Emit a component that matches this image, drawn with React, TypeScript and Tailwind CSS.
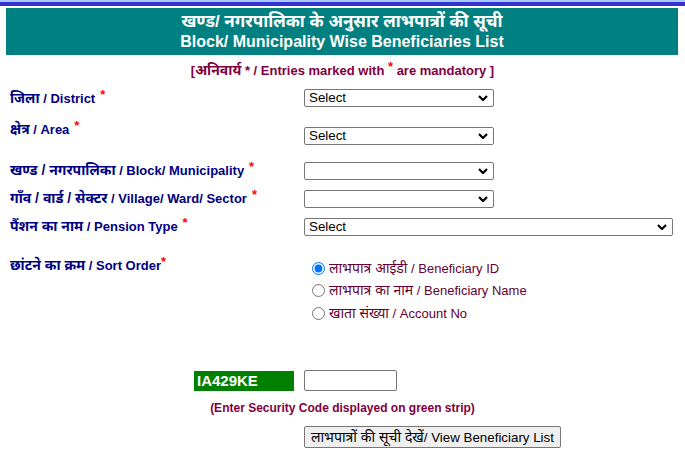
import type { ReactNode } from "react";

const font = { fontFamily: '"Liberation Sans", Arial, "Noto Sans", sans-serif' };

// Devanagari fallback renders smaller than the original's, so nudge it up
function Hi({ children, size = "text-[14px]" }: { children: ReactNode; size?: string }) {
  return <span className={size}>{children}</span>;
}

function Star() {
  return <sup className="text-[#ff0000] text-[13px] top-[-4px] ml-[5px]">*</sup>;
}

function Chevron() {
  return (
    <svg
      className="pointer-events-none absolute right-[6px] top-1/2 -translate-y-1/2"
      width="10"
      height="6"
      viewBox="0 0 10 6"
    >
      <path d="M1 1 L5 5 L9 1" fill="none" stroke="#000" strokeWidth="2.2" />
    </svg>
  );
}

function Dropdown({ wide, value }: { wide?: boolean; value?: string }) {
  return (
    <div className={`relative ${wide ? "w-[369px]" : "w-[190px]"} h-[18px]`}>
      <select
        defaultValue="x"
        className="block appearance-none w-full h-full border border-[#767676] rounded-[2px] bg-white pl-[4px] text-[13.333px] leading-[16px] text-black"
      >
        <option value="x">{value ?? ""}</option>
      </select>
      <Chevron />
    </div>
  );
}

function Row({
  h,
  labelPad,
  selPad,
  label,
  children,
}: {
  h: string;
  labelPad: string;
  selPad: string;
  label: ReactNode;
  children: ReactNode;
}) {
  return (
    <div className={`flex items-start ${h}`}>
      <div className={`w-[294px] ${labelPad} text-[13px] leading-[16px] font-bold text-[#000080]`}>
        {label}
      </div>
      <div className={selPad}>{children}</div>
    </div>
  );
}

export default function App() {
  return (
    <div className="w-[685px] h-[456px] bg-white overflow-hidden" style={font}>
      {/* top strip */}
      <div className="h-[2px] bg-[#a8c8ff]" />
      <div className="h-[4px] bg-[#3333cc]" />

      {/* title */}
      <div className="mt-[2px] ml-[6px] mr-[7px] h-[47px] bg-[#008080] flex flex-col items-center justify-center text-white font-bold text-[16px] leading-[20px]">
        <div className="text-[17px]">खण्ड/ नगरपालिका के अनुसार लाभपात्रों की सूची</div>
        <div>Block/ Municipality Wise Beneficiaries List</div>
      </div>

      <div className="pt-[7px] h-[23px] text-center text-[13px] leading-[16px] font-bold text-[#800040]">
        [<Hi>अनिवार्य</Hi> * / Entries marked with{" "}
        <sup className="text-[#ff0000] text-[13px] top-[-4px]">*</sup> are mandatory ]
      </div>

      <div className="px-[10px] mt-[8px]">
        <Row h="h-[30px]" labelPad="pt-[4px]" selPad="pt-[3px]" label={<><Hi>जिला</Hi> / District<Star /></>}>
          <Dropdown value="Select" />
        </Row>
        <Row h="h-[40px]" labelPad="pt-[5px]" selPad="pt-[11px]" label={<><Hi>क्षेत्र</Hi> / Area<Star /></>}>
          <Dropdown value="Select" />
        </Row>
        <Row
          h="h-[30px]"
          labelPad="pt-[6px]"
          selPad="pt-[6px]"
          label={<><Hi>खण्ड / नगरपालिका</Hi> / Block/ Municipality<Star /></>}
        >
          <Dropdown />
        </Row>
        <Row
          h="h-[28px]"
          labelPad="pt-[4px]"
          selPad="pt-[4px]"
          label={<><Hi>गाँव / वार्ड / सेक्टर</Hi> / Village/ Ward/ Sector<Star /></>}
        >
          <Dropdown />
        </Row>
        <Row
          h="h-[40px]"
          labelPad="pt-[4px]"
          selPad="pt-[4px]"
          label={<><Hi>पैंशन का नाम</Hi> / Pension Type<Star /></>}
        >
          <Dropdown wide value="Select" />
        </Row>

        {/* sort order */}
        <div className="flex items-start h-[70.5px]">
          <div className="w-[294px] pt-[3px] text-[13px] leading-[16px] font-bold text-[#000080]">
            <Hi>छांटने का क्रम</Hi> / Sort Order
            <sup className="text-[#ff0000] text-[13px] top-[-4px]">*</sup>
          </div>
          <div className="pt-[3px] pl-[8px] text-[13px] leading-[16px] text-[#660033]">
            {[
              ["लाभपात्र आईडी", "Beneficiary ID"],
              ["लाभपात्र का नाम", "Beneficiary Name"],
              ["खाता संख्या", "Account No"],
            ].map(([hi, en], i) => (
              <label key={en} className="flex items-center h-[22.5px]">
                <input
                  type="radio"
                  name="sort"
                  defaultChecked={i === 0}
                  className="m-0 mr-[4px] w-[13px] h-[13px]"
                />
                <span>
                  <Hi>{hi}</Hi> / {en}
                </span>
              </label>
            ))}
          </div>
        </div>

        {/* security code */}
        <div className="flex items-start mt-[45.5px]">
          <div className="w-[294px] flex justify-end pr-[10px] pt-[1px]">
            <div className="w-[100px] h-[20px] bg-[#008000] text-white font-bold text-[15px] leading-[20px] pl-[3px]">
              IA429KE
            </div>
          </div>
          <input
            type="text"
            className="block w-[93px] h-[21px] border border-[#767676] rounded-[2px] bg-white"
          />
        </div>
      </div>

      <div className="mt-[9px] text-center text-[12px] leading-[16px] font-bold text-[#800040]">
        (Enter Security Code displayed on green strip)
      </div>

      <div className="mt-[10px] pl-[304px]">
        <button className="block h-[22px] px-[6px] border border-[#767676] rounded-[2px] bg-[#efefef] text-[13.333px] leading-[16px] text-black">
          <Hi>लाभपात्रों की सूची देखें</Hi>/ View Beneficiary List
        </button>
      </div>
    </div>
  );
}
